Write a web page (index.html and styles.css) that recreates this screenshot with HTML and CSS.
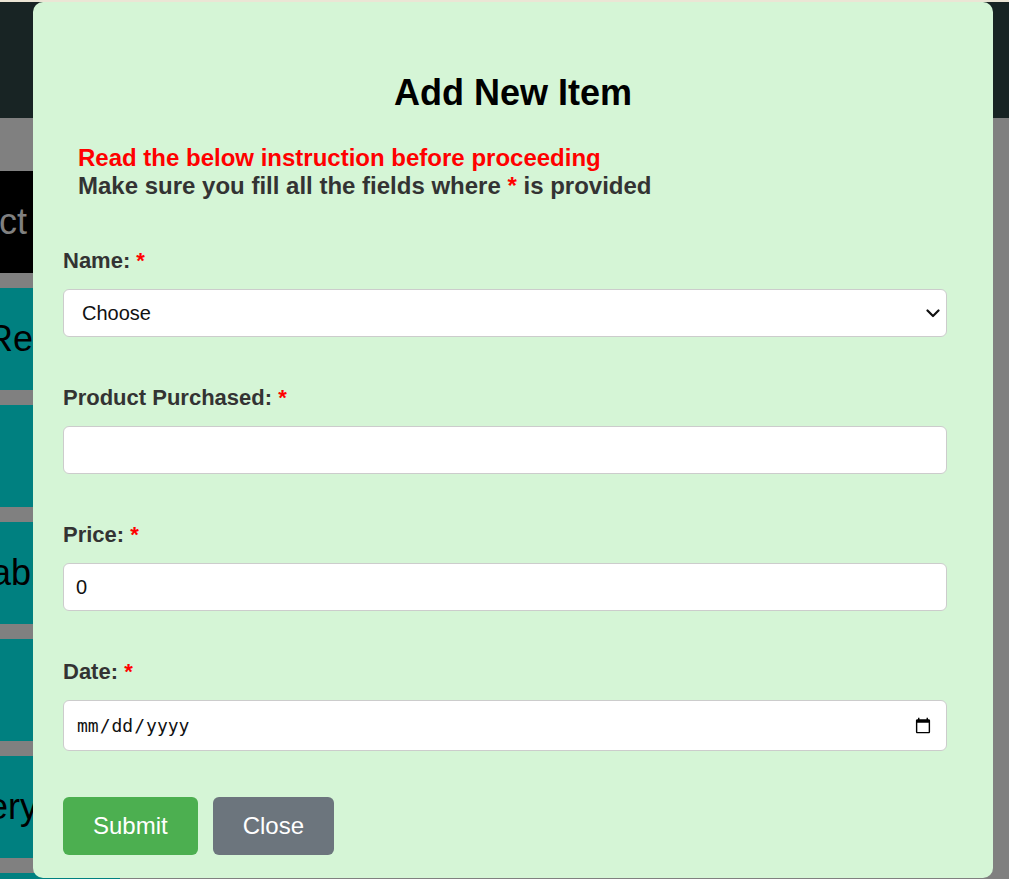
FILE: index.html
```html
<!DOCTYPE html>
<html lang="en">
<head>
<meta charset="utf-8">
<title>Add New Item</title>
<link rel="stylesheet" href="styles.css">
</head>
<body>
<div class="topline"></div>
<header class="header"></header>
<main class="main">
  <nav class="sidebar">
    <div class="nav-item nav-dark"><span class="label l-product">Product</span></div>
    <div class="nav-item"><span class="label l-records">Records</span></div>
    <div class="nav-item"><span class="label"></span></div>
    <div class="nav-item"><span class="label l-table">Table</span></div>
    <div class="nav-item"><span class="label"></span></div>
    <div class="nav-item"><span class="label l-delivery">Delivery</span></div>
    <div class="nav-item"><span class="label"></span></div>
  </nav>
</main>

<div class="modal">
  <h2 class="modal-title">Add New Item</h2>
  <div class="modal-body">
    <div class="notes">
      <div class="note-warn">Read the below instruction before proceeding</div>
      <div class="note-info">Make sure you fill all the fields where <span class="req">*</span> is provided</div>
    </div>
    <form class="form">
      <div class="field">
        <label class="field-label" for="name">Name: <span class="req">*</span></label>
        <div class="select-wrap">
          <select id="name" class="control control-select">
            <option>Choose</option>
          </select>
          <svg class="chevron" width="14" height="9" viewBox="0 0 14 9" aria-hidden="true">
            <path d="M1.5 1.5 L7 7 L12.5 1.5" fill="none" stroke="#111" stroke-width="2.2" stroke-linecap="round" stroke-linejoin="round"/>
          </svg>
        </div>
      </div>
      <div class="field">
        <label class="field-label" for="product">Product Purchased: <span class="req">*</span></label>
        <input id="product" class="control" type="text">
      </div>
      <div class="field">
        <label class="field-label" for="price">Price: <span class="req">*</span></label>
        <input id="price" class="control" type="number" value="0">
      </div>
      <div class="field">
        <label class="field-label" for="date">Date: <span class="req">*</span></label>
        <input id="date" class="control control-date" type="date">
      </div>
      <div class="actions">
        <button type="button" class="btn btn-submit">Submit</button>
        <button type="button" class="btn btn-close">Close</button>
      </div>
    </form>
  </div>
</div>
</body>
</html>
```
FILE: styles.css
```css
* { box-sizing: border-box; }

html, body {
  margin: 0;
  height: 879px;
  overflow: hidden;
}

body {
  background: #808080;
  font-family: "Liberation Sans", Arial, sans-serif;
}

.topline {
  height: 2px;
  background: #ebe5d5;
}

.header {
  height: 116px;
  background: #182424;
}

.main {
  padding-top: 53px;
}

.sidebar {
  width: 120px;
  display: flex;
  flex-direction: column;
  gap: 15px;
}

.nav-item {
  height: 102px;
  flex: none;
  background: #008080;
  color: #000;
  font-size: 36px;
  display: flex;
  align-items: center;
  overflow: hidden;
}

.nav-dark {
  background: #000;
  color: #808080;
}

.label { white-space: nowrap; }
.l-product { margin-left: -97px; }
.l-records { margin-left: -13px; }
.l-table { margin-left: -27px; }
.l-delivery { margin-left: -92px; }

.modal {
  position: absolute;
  left: 33px;
  top: 2px;
  width: 960px;
  height: 876px;
  background: #d5f5d6;
  border-radius: 10px;
  padding-top: 70px;
}

.modal-title {
  margin: 0;
  text-align: center;
  font-size: 36px;
  line-height: 42px;
  font-weight: bold;
  color: #000;
}

.modal-body {
  padding: 30px 46px 0 30px;
}

.notes {
  padding-left: 15px;
  font-size: 24px;
  line-height: 28px;
  font-weight: bold;
}

.note-warn { color: #ff0000; }
.note-info { color: #333; }

.req { color: #ff0000; }

.form {
  margin-top: 48px;
}

.field {
  margin-bottom: 48px;
}

.field-label {
  display: block;
  font-size: 22px;
  line-height: 25px;
  font-weight: bold;
  color: #333;
  margin-bottom: 16px;
}

.control {
  display: block;
  width: 100%;
  height: 48px;
  padding: 0 12px;
  border: 1px solid #ccc;
  border-radius: 6px;
  background: #fff;
  font-family: "Liberation Sans", Arial, sans-serif;
  font-size: 20px;
  color: #111;
}

.select-wrap {
  position: relative;
}

.control-select {
  appearance: none;
  -webkit-appearance: none;
  padding-left: 18px;
  padding-right: 36px;
}

.chevron {
  position: absolute;
  right: 7px;
  top: 20px;
  pointer-events: none;
}

.control-date {
  height: 51px;
  font-family: "DejaVu Sans Mono", "Liberation Mono", monospace;
  font-size: 18px;
}

.actions {
  display: flex;
  gap: 15px;
  margin-top: -2px;
}

.btn {
  height: 58px;
  padding: 0 30px;
  border: none;
  border-radius: 6px;
  color: #fff;
  font-family: "Liberation Sans", Arial, sans-serif;
  font-size: 24px;
}

.btn-submit { background: #4caf50; }
.btn-close { background: #6c757d; }
```
